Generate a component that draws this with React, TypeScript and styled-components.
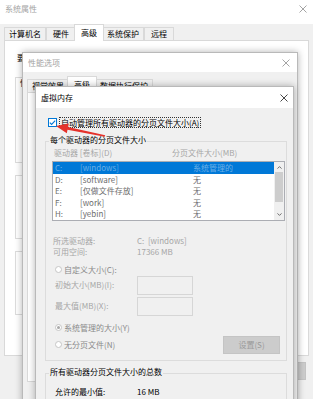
import React from 'react';
import styled, { createGlobalStyle } from 'styled-components';

const GlobalStyle = createGlobalStyle`
  html, body {
    margin: 0;
    padding: 0;
    background: #ffffff;
  }
  body {
    font-family: "Noto Sans CJK SC", "Noto Sans", "Liberation Sans", sans-serif;
    font-size: 8px;
    line-height: 10px;
    color: #000;
  }
  * {
    box-sizing: border-box;
  }
`;

const Desktop = styled.div`
  position: relative;
  width: 313px;
  height: 399px;
  overflow: hidden;
  background: #fff;
`;

// dialogs sit on the desktop at their own coordinates
const Window = styled.div<{ $left: number; $top: number; $width: number; $height: number; $z: number }>`
  position: absolute;
  left: ${(p) => p.$left}px;
  top: ${(p) => p.$top}px;
  width: ${(p) => p.$width}px;
  height: ${(p) => p.$height}px;
  z-index: ${(p) => p.$z};
  display: flex;
  flex-direction: column;
  background: #f0f0f0;
  border: 1px solid #b9b9b9;
  box-shadow: 0 0 7px rgba(0, 0, 0, 0.3);
`;

const TitleBar = styled.div<{ $height: number; $active?: boolean; $padRight: number }>`
  flex: none;
  height: ${(p) => p.$height}px;
  display: flex;
  align-items: center;
  justify-content: space-between;
  padding: 0 ${(p) => p.$padRight}px 0 5px;
  background: #fff;
  color: ${(p) => (p.$active ? '#000' : '#a3a3a3')};
`;

const TabStrip = styled.div<{ $top: number; $left: number }>`
  flex: none;
  height: 16px;
  margin-top: ${(p) => p.$top}px;
  padding-left: ${(p) => p.$left}px;
  display: flex;
  align-items: flex-end;
`;

const Tab = styled.div<{ $selected?: boolean; $min?: number }>`
  position: relative;
  min-width: ${(p) => p.$min ?? 30}px;
  height: ${(p) => (p.$selected ? 17 : 13)}px;
  margin: 0 ${(p) => (p.$selected ? -2 : 0)}px ${(p) => (p.$selected ? -1 : 0)}px;
  padding: 0 4px;
  display: flex;
  align-items: ${(p) => (p.$selected ? 'flex-start' : 'center')};
  justify-content: center;
  padding-top: ${(p) => (p.$selected ? 3 : 0)}px;
  border: 1px solid #d9d9d9;
  border-bottom: none;
  background: ${(p) => (p.$selected ? '#fff' : '#f0f0f0')};
  z-index: ${(p) => (p.$selected ? 1 : 0)};
  white-space: nowrap;
`;

const TabPage = styled.div<{ $height: number }>`
  flex: none;
  height: ${(p) => p.$height}px;
  margin: 0 4px;
  background: #fff;
  border: 1px solid #d9d9d9;
  padding: 12px 0 0 12px;
  display: flex;
  flex-direction: column;
`;

const ButtonRow = styled.div`
  display: flex;
  justify-content: flex-end;
  gap: 5px;
  padding: 6px 7px 0 0;
`;

const Button = styled.div<{ $width: number; $disabled?: boolean }>`
  width: ${(p) => p.$width}px;
  height: 18px;
  display: flex;
  align-items: center;
  justify-content: center;
  background: #cccccc;
  border: 1px solid #c4c4c4;
  color: ${(p) => (p.$disabled ? '#9a9a9a' : '#000')};
`;

const OuterGroup = styled.div<{ $height: number; $top: number }>`
  margin: ${(p) => p.$top}px 10px 0 -2px;
  height: ${(p) => p.$height}px;
  border: 1px solid #dcdcdc;
  padding: 0 6px;
`;

const OuterGroupTitle = styled.div`
  display: inline-block;
  margin: -6px 0 0 -3px;
  padding: 0 1px;
  background: #fff;
`;

/* ---------- 虚拟内存 body ---------- */

const DialogBody = styled.div`
  flex: 1;
  padding-top: 8px;
  display: flex;
  flex-direction: column;
`;

const CheckRow = styled.div`
  height: 12px;
  display: flex;
  align-items: center;
  padding-left: 12px;
  gap: 2px;
`;

const FocusLabel = styled.span`
  border: 1px dotted #333;
  padding: 0 1px;
  line-height: 9px;
`;

const GroupBox = styled.div<{ $top: number }>`
  margin: ${(p) => p.$top}px 0 0 9px;
  width: 242px;
  border: 1px solid #dcdcdc;
  padding: 0 1px 6px 6px;
  display: flex;
  flex-direction: column;
`;

const GroupTitle = styled.div`
  align-self: flex-start;
  height: 10px;
  margin: -7px 0 0 -3px;
  padding: 0 1px;
  background: #f0f0f0;
`;

const HeaderRow = styled.div`
  margin-top: 3px;
  padding-left: 2px;
  display: grid;
  grid-template-columns: 118px 1fr;
  color: #a6a6a6;
`;

const ListBox = styled.div`
  margin-top: 3px;
  width: 233px;
  border: 1px solid #abadb3;
  background: #fff;
  display: flex;
`;

const ListRows = styled.div`
  flex: 1;
  display: flex;
  flex-direction: column;
`;

const ListRow = styled.div<{ $selected?: boolean }>`
  height: 11.5px;
  line-height: 11.5px;
  padding-left: 2px;
  display: grid;
  grid-template-columns: 25px 113px 1fr;
  background: ${(p) => (p.$selected ? '#0078d7' : 'transparent')};
  color: ${(p) => (p.$selected ? 'rgba(255,255,255,0.42)' : '#6d6d6d')};
  white-space: nowrap;
`;

const ScrollBar = styled.div`
  width: 10px;
  background: #f0f0f0;
  display: flex;
  flex-direction: column;
  align-items: center;
`;

const ScrollArrow = styled.div`
  height: 10px;
  display: flex;
  align-items: center;
  justify-content: center;
`;

const ScrollTrack = styled.div`
  flex: 1;
  width: 100%;
  display: flex;
  justify-content: center;
`;

const ScrollThumb = styled.div`
  width: 8px;
  height: 30px;
  background: #cdcdcd;
`;

const InfoBlock = styled.div<{ $top: number }>`
  margin-top: ${(p) => p.$top}px;
  display: flex;
  flex-direction: column;
`;

const InfoRow = styled.div<{ $pad: number; $label: number; $muted?: boolean }>`
  height: 11px;
  line-height: 11px;
  padding-left: ${(p) => p.$pad}px;
  display: grid;
  grid-template-columns: ${(p) => p.$label}px 1fr;
  color: ${(p) => (p.$muted ? '#a6a6a6' : '#000')};
  white-space: nowrap;
`;

const RadioRow = styled.div<{ $top: number }>`
  height: 12px;
  margin-top: ${(p) => p.$top}px;
  padding-left: 3px;
  display: flex;
  align-items: center;
  gap: 2px;
  color: #8a8a8a;
`;

const RadioCircle = styled.span<{ $checked?: boolean }>`
  width: 7px;
  height: 7px;
  border-radius: 50%;
  border: 1px solid #c6c6c6;
  background: #fff;
  display: flex;
  align-items: center;
  justify-content: center;

  &::after {
    content: '';
    display: ${(p) => (p.$checked ? 'block' : 'none')};
    width: 3px;
    height: 3px;
    border-radius: 50%;
    background: #a8a8a8;
  }
`;

const InputRows = styled.div`
  display: flex;
  flex-direction: column;
  gap: 2px;
`;

const InputRow = styled.div`
  height: 19px;
  padding-left: 3px;
  display: grid;
  grid-template-columns: 82px 56px;
  align-items: center;
  color: #a6a6a6;
  white-space: nowrap;
`;

const TextInput = styled.div`
  height: 19px;
  border: 1px solid #d6d6d6;
  background: #f0f0f0;
`;

const BottomRow = styled.div`
  margin-top: 6px;
  display: flex;
  justify-content: space-between;
  padding-right: 5px;
`;

const RadioColumn = styled.div`
  display: flex;
  flex-direction: column;
`;

const SetButton = styled(Button)`
  margin-top: 14px;
`;

const Arrow = styled.svg`
  position: absolute;
  left: 50px;
  top: 115px;
  z-index: 10;
`;

const CloseIcon = ({ color }: { color: string }) => (
  <svg width="8" height="8" viewBox="0 0 8 8">
    <path d="M0.5 0.5L7.5 7.5M7.5 0.5L0.5 7.5" stroke={color} strokeWidth="0.9" fill="none" />
  </svg>
);

const Chevron = ({ up }: { up?: boolean }) => (
  <svg width="5" height="3" viewBox="0 0 5 3">
    <path d={up ? 'M0.5 2.6L2.5 0.6L4.5 2.6' : 'M0.5 0.4L2.5 2.4L4.5 0.4'} stroke="#606060" strokeWidth="0.9" fill="none" />
  </svg>
);

const CheckBox = () => (
  <svg width="9" height="9" viewBox="0 0 9 9">
    <rect x="0.5" y="0.5" width="8" height="8" fill="#fff" stroke="#0078d7" />
    <path d="M1.8 4.6L3.6 6.4L7.2 2.6" stroke="#0078d7" strokeWidth="1.1" fill="none" />
  </svg>
);

const drives = [
  { letter: 'C:', label: '[windows]', size: '系统管理的' },
  { letter: 'D:', label: '[software]', size: '无' },
  { letter: 'E:', label: '[仅做文件存放]', size: '无' },
  { letter: 'F:', label: '[work]', size: '无' },
  { letter: 'H:', label: '[yebin]', size: '无' },
];

export default function App() {
  return (
    <Desktop>
      <GlobalStyle />

      <Window $left={-1} $top={-8} $width={315} $height={420} $z={1}>
        <TitleBar $height={31} $padRight={6}>
          <span>系统属性</span>
          <CloseIcon color="#9a9a9a" />
        </TitleBar>
        <TabStrip $top={0} $left={4}>
          <Tab $min={40}>计算机名</Tab>
          <Tab>硬件</Tab>
          <Tab $selected>高级</Tab>
          <Tab $min={40}>系统保护</Tab>
          <Tab>远程</Tab>
        </TabStrip>
        <TabPage $height={316}>
          <div>要</div>
          <OuterGroup $top={14} $height={86}>
            <OuterGroupTitle>性</OuterGroupTitle>
          </OuterGroup>
          <OuterGroup $top={12} $height={64} />
          <OuterGroup $top={12} $height={64} />
        </TabPage>
        <ButtonRow>
          <Button $width={50} />
          <Button $width={50} />
          <Button $width={50} />
        </ButtonRow>
      </Window>

      <Window $left={22} $top={52} $width={276} $height={400} $z={2}>
        <TitleBar $height={19} $padRight={7}>
          <span>性能选项</span>
          <CloseIcon color="#9a9a9a" />
        </TitleBar>
        <TabStrip $top={4} $left={4}>
          <Tab $min={40}>视觉效果</Tab>
          <Tab $selected>高级</Tab>
          <Tab $min={56}>数据执行保护</Tab>
        </TabStrip>
        <TabPage $height={290} />
      </Window>

      <Window $left={35} $top={86} $width={259} $height={330} $z={3}>
        <TitleBar $height={21} $active $padRight={5}>
          <span>虚拟内存</span>
          <CloseIcon color="#333" />
        </TitleBar>
        <DialogBody>
          <CheckRow>
            <CheckBox />
            <FocusLabel>自动管理所有驱动器的分页文件大小(A)</FocusLabel>
          </CheckRow>

          <GroupBox $top={13}>
            <GroupTitle>每个驱动器的分页文件大小</GroupTitle>
            <HeaderRow>
              <span>驱动器 [卷标](D)</span>
              <span>分页文件大小(MB)</span>
            </HeaderRow>
            <ListBox>
              <ListRows>
                {drives.map((d, i) => (
                  <ListRow key={d.letter} $selected={i === 0}>
                    <span>{d.letter}</span>
                    <span>{d.label}</span>
                    <span>{d.size}</span>
                  </ListRow>
                ))}
              </ListRows>
              <ScrollBar>
                <ScrollArrow>
                  <Chevron up />
                </ScrollArrow>
                <ScrollTrack>
                  <ScrollThumb />
                </ScrollTrack>
                <ScrollArrow>
                  <Chevron />
                </ScrollArrow>
              </ScrollBar>
            </ListBox>

            <InfoBlock $top={14}>
              <InfoRow $pad={1} $label={84} $muted>
                <span>所选驱动器:</span>
                <span>C:&nbsp;&nbsp;[windows]</span>
              </InfoRow>
              <InfoRow $pad={1} $label={84} $muted>
                <span>可用空间:</span>
                <span>17366 MB</span>
              </InfoRow>
            </InfoBlock>

            <RadioRow $top={7}>
              <RadioCircle />
              <span>自定义大小(C):</span>
            </RadioRow>
            <InputRows>
              <InputRow>
                <span>初始大小(MB)(I):</span>
                <TextInput />
              </InputRow>
              <InputRow>
                <span>最大值(MB)(X):</span>
                <TextInput />
              </InputRow>
            </InputRows>

            <BottomRow>
              <RadioColumn>
                <RadioRow $top={0}>
                  <RadioCircle $checked />
                  <span>系统管理的大小(Y)</span>
                </RadioRow>
                <RadioRow $top={5}>
                  <RadioCircle />
                  <span>无分页文件(N)</span>
                </RadioRow>
              </RadioColumn>
              <SetButton $width={57} $disabled>
                设置(S)
              </SetButton>
            </BottomRow>
          </GroupBox>

          <GroupBox $top={12}>
            <GroupTitle>所有驱动器分页文件大小的总数</GroupTitle>
            <InfoBlock $top={9}>
              <InfoRow $pad={3} $label={82}>
                <span>允许的最小值:</span>
                <span>16 MB</span>
              </InfoRow>
            </InfoBlock>
          </GroupBox>
        </DialogBody>
      </Window>

      <Arrow width="60" height="28" viewBox="0 0 60 28">
        <polygon
          points="6,11 18.8,8.4 18.1,11.9 55.2,20.2 54.8,21.8 17.5,14.8 16.8,18.3"
          fill="#e5322b"
        />
      </Arrow>
    </Desktop>
  );
}
